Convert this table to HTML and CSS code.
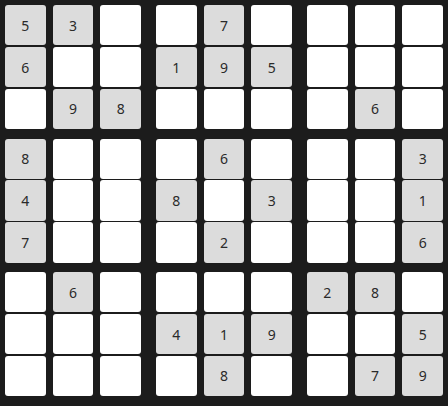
FILE: index.html
```html
<!DOCTYPE html>
<html>
<head>
<meta charset="utf-8">
<link rel="stylesheet" href="styles.css">
</head>
<body>
<div class="board">
  <div class="block">
    <div class="cell given">5</div><div class="cell given">3</div><div class="cell"></div>
    <div class="cell given">6</div><div class="cell"></div><div class="cell"></div>
    <div class="cell"></div><div class="cell given">9</div><div class="cell given">8</div>
  </div>
  <div class="block">
    <div class="cell"></div><div class="cell given">7</div><div class="cell"></div>
    <div class="cell given">1</div><div class="cell given">9</div><div class="cell given">5</div>
    <div class="cell"></div><div class="cell"></div><div class="cell"></div>
  </div>
  <div class="block">
    <div class="cell"></div><div class="cell"></div><div class="cell"></div>
    <div class="cell"></div><div class="cell"></div><div class="cell"></div>
    <div class="cell"></div><div class="cell given">6</div><div class="cell"></div>
  </div>
  <div class="block">
    <div class="cell given">8</div><div class="cell"></div><div class="cell"></div>
    <div class="cell given">4</div><div class="cell"></div><div class="cell"></div>
    <div class="cell given">7</div><div class="cell"></div><div class="cell"></div>
  </div>
  <div class="block">
    <div class="cell"></div><div class="cell given">6</div><div class="cell"></div>
    <div class="cell given">8</div><div class="cell"></div><div class="cell given">3</div>
    <div class="cell"></div><div class="cell given">2</div><div class="cell"></div>
  </div>
  <div class="block">
    <div class="cell"></div><div class="cell"></div><div class="cell given">3</div>
    <div class="cell"></div><div class="cell"></div><div class="cell given">1</div>
    <div class="cell"></div><div class="cell"></div><div class="cell given">6</div>
  </div>
  <div class="block">
    <div class="cell"></div><div class="cell given">6</div><div class="cell"></div>
    <div class="cell"></div><div class="cell"></div><div class="cell"></div>
    <div class="cell"></div><div class="cell"></div><div class="cell"></div>
  </div>
  <div class="block">
    <div class="cell"></div><div class="cell"></div><div class="cell"></div>
    <div class="cell given">4</div><div class="cell given">1</div><div class="cell given">9</div>
    <div class="cell"></div><div class="cell given">8</div><div class="cell"></div>
  </div>
  <div class="block">
    <div class="cell given">2</div><div class="cell given">8</div><div class="cell"></div>
    <div class="cell"></div><div class="cell"></div><div class="cell given">5</div>
    <div class="cell"></div><div class="cell given">7</div><div class="cell given">9</div>
  </div>
</div>
</body>
</html>
```
FILE: styles.css
```css
html, body {
  margin: 0;
  padding: 0;
  background: #1c1c1c;
}
body {
  width: 448px;
  height: 406px;
  overflow: hidden;
  font-family: "Noto Sans", "DejaVu Sans", sans-serif;
}
.board {
  display: grid;
  grid-template-columns: repeat(3, 136px);
  grid-auto-rows: 124px;
  column-gap: 15px;
  row-gap: 9.5px;
  padding: 5px;
}
.block {
  display: grid;
  grid-template-columns: repeat(3, 1fr);
  grid-template-rows: repeat(3, 1fr);
  column-gap: 7px;
  row-gap: 1.3px;
}
.cell {
  background: #ffffff;
  border-radius: 3px;
  display: flex;
  align-items: center;
  justify-content: center;
  font-size: 14px;
  color: #2a2a2a;
}
.cell.given {
  background: #dcdcdc;
}
```
